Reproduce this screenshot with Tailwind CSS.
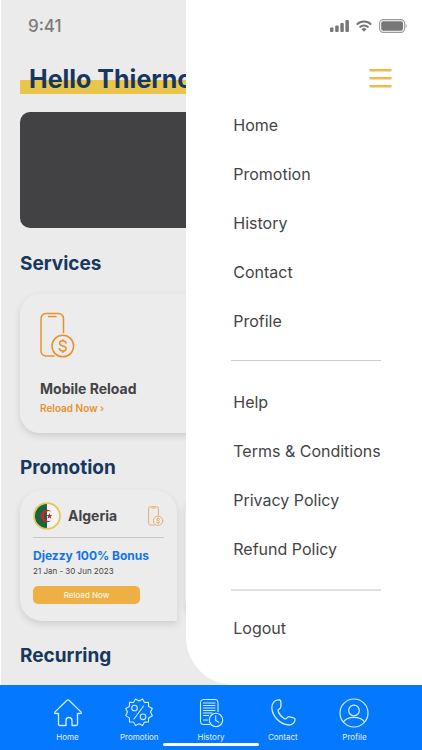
<!DOCTYPE html>
<html lang="en">
<head>
<meta charset="utf-8">
<meta name="viewport" content="width=device-width, initial-scale=1">
<title>Mobile Reload</title>
<script src="https://cdn.jsdelivr.net/npm/@tailwindcss/browser@4"></script>
</head>
<body class="bg-white font-['Inter','Liberation_Sans',sans-serif] text-[#444446]">
<svg class="hidden" aria-hidden="true">
  <symbol id="phone-coin" viewBox="0 0 36 46">
    <g fill="none" stroke="currentColor" stroke-linecap="round" stroke-linejoin="round">
      <path d="M23.500 20.500V6.500a5 5 0 0 0-5-5H6a5 5 0 0 0-5 5V39a5 5 0 0 0 5 5h8M8.500 4.500h7.500"/>
      <circle cx="22.800" cy="34" r="10.800"/>
      <path d="M26 31c-.4-1.500-1.600-2.200-3.200-2.200-1.900 0-3.200 1-3.200 2.500 0 3.600 6.600 1.600 6.600 5.200 0 1.600-1.500 2.600-3.400 2.600s-3.200-.9-3.500-2.400M22.800 27.800v1M22.800 39.200v1.400"/>
    </g>
  </symbol>
</svg>
<div class="flex min-h-screen flex-col">
  <div class="relative flex-1 overflow-hidden border-l border-white bg-[#ebebeb]">
    <main class="pl-[19px]">
      <p class="pl-2 pt-4 text-[17px] leading-5 font-medium text-[#7b7b7b]">9:41</p>
      <h1 class="mt-7 bg-linear-to-b from-transparent from-53% to-[#e9c54b] to-53% bg-no-repeat pl-[9px] text-[25px] leading-[30px] font-bold whitespace-nowrap text-[#17375e]">Hello Thierno</h1>
      <div class="mt-[18px] h-[116px] rounded-[10px] bg-[#424244]"></div>
      <h2 class="mt-[22px] text-[19px] leading-7 font-bold text-[#17375e]">Services</h2>
      <section class="mt-4 h-[139px] rounded-[20px] bg-[#ececec] pt-[18px] pl-5 shadow-[0_3px_6px_rgba(60,60,90,0.16)]">
        <svg class="h-[46px] w-9 text-[#e8912c] [stroke-width:1.5]"><use href="#phone-coin"/></svg>
        <h3 class="mt-5 text-sm leading-[22px] font-bold">Mobile Reload</h3>
        <a href="#" class="block text-[10px] leading-4 font-semibold text-[#e8912c]">Reload Now&nbsp;›</a>
      </section>
      <h2 class="mt-[21px] text-[19px] leading-7 font-bold text-[#17375e]">Promotion</h2>
      <div class="mt-2 flex gap-2">
        <article class="h-[131px] w-[157px] shrink-0 rounded-[22px] rounded-br-none bg-[#ececec] px-[13px] pt-[13px] shadow-[0_3px_6px_rgba(60,60,90,0.16)]">
          <div class="flex h-[35px] items-center border-b border-[#cbc7c4] pb-2">
            <svg class="size-7 shrink-0" viewBox="0 0 27 27">
              <circle cx="13.500" cy="13.500" r="12.500" fill="#f4f4f2"/>
              <path d="M13.500 1.500a12 12 0 0 0 0 24z" fill="#11683a"/>
              <path d="M17.800 9.500a6 6 0 1 0 0 8 4.700 4.700 0 1 1 0-8z" fill="#d01f3c"/>
              <path d="m15.800 10.600.7 2 2.200.1-1.700 1.300.6 2.100-1.800-1.200-1.800 1.200.6-2.100-1.700-1.300 2.200-.1z" fill="#d01f3c"/>
              <circle cx="13.500" cy="13.500" r="12.500" fill="none" stroke="#e7c359" stroke-width="1.700"/>
            </svg>
            <h3 class="ml-[7px] flex-1 text-sm font-bold">Algeria</h3>
            <svg class="h-5 w-4 text-[#eba55a] [stroke-width:2]"><use href="#phone-coin"/></svg>
          </div>
          <h4 class="mt-2.5 text-xs leading-4 font-bold whitespace-nowrap text-[#1374e9]">Djezzy 100% Bonus</h4>
          <p class="text-[8px] leading-[14px]">21 Jan - 30 Jun 2023</p>
          <button class="mt-2 block h-[18px] w-[107px] rounded-[5px] bg-[#eeb044] text-[8px] font-medium text-[#fbf3e2]">Reload Now</button>
        </article>
        <article class="h-[131px] flex-1 rounded-[22px] bg-[#ececec] shadow-[0_3px_6px_rgba(60,60,90,0.16)]"></article>
      </div>
      <h2 class="mt-[21px] pb-3 text-[19px] leading-7 font-bold text-[#17375e]">Recurring</h2>
    </main>

    <aside class="absolute inset-y-0 right-0 w-[56%] rounded-bl-[48px] bg-white pl-[47px]">
      <div class="flex h-[52px] items-center justify-end gap-[7px] pr-[15px]">
        <svg class="h-3 w-[19px]" viewBox="0 0 19 12" fill="#777"><rect y="7.500" width="3.500" height="4.500" rx="1"/><rect x="5.200" y="5.500" width="3.500" height="6.500" rx="1"/><rect x="10.300" y="3" width="3.500" height="9" rx="1"/><rect x="15.400" width="3.500" height="12" rx="1"/></svg>
        <svg class="h-3 w-4" viewBox="0 0 16 12" fill="none" stroke="#777" stroke-width="2"><path d="M.8 4.600a10.200 10.200 0 0 1 14.400 0M3.500 7.400a6.400 6.400 0 0 1 9 0"/><path d="M5.500 9.300a3.500 3.500 0 0 1 5 0L8 11.800z" fill="#777" stroke="none"/></svg>
        <svg class="h-[14px] w-7" viewBox="0 0 28 14"><rect x=".6" y=".6" width="25" height="12.800" rx="3.800" fill="none" stroke="#999" stroke-width="1.100"/><rect x="2.200" y="2.200" width="21.800" height="9.600" rx="2" fill="#777"/><path d="M26.700 4.800v4.400c1.200-.5 1.200-3.900 0-4.400z" fill="#999"/></svg>
      </div>
      <div class="flex h-12 items-start justify-end pt-4 pr-[30px]">
        <button aria-label="Close menu" class="block"><svg class="h-5 w-[23px]" viewBox="0 0 23 20" stroke="#f3b74c" stroke-width="2.600" stroke-linecap="round"><path d="M1.500 2.300h20M1.500 10.300h20M1.500 18.300h20"/></svg></button>
      </div>
      <nav aria-label="Menu" class="pr-[41px] text-base whitespace-nowrap">
        <a href="#" class="flex h-[49px] items-center">Home</a>
        <a href="#" class="flex h-[49px] items-center">Promotion</a>
        <a href="#" class="flex h-[49px] items-center">History</a>
        <a href="#" class="flex h-[49px] items-center">Contact</a>
        <a href="#" class="flex h-[49px] items-center">Profile</a>
        <hr class="-ml-0.5 mt-[15px] mb-4 border-[#cfcdca]">
        <a href="#" class="flex h-[49px] items-center">Help</a>
        <a href="#" class="flex h-[49px] items-center">Terms &amp; Conditions</a>
        <a href="#" class="flex h-[49px] items-center">Privacy Policy</a>
        <a href="#" class="flex h-[49px] items-center">Refund Policy</a>
        <hr class="-ml-0.5 mt-4 mb-3 border-t-2 border-[#e2e1df]">
        <a href="#" class="flex h-[49px] items-center">Logout</a>
      </nav>
    </aside>
  </div>

  <nav aria-label="Tabs" class="relative flex h-[65px] shrink-0 justify-center bg-[#0478fe] pt-[13px] text-[8px] leading-3 text-[#e4f3ff]">
    <a href="#" class="flex w-[17%] flex-col items-center gap-[3px]">
      <svg class="size-[30px]" viewBox="0 0 30 30" fill="none" stroke="#d2f0ff" stroke-width="1.300" stroke-linejoin="round" stroke-linecap="round"><path d="M5.500 15.500H2.600c-1 0-1.200-.9-.5-1.600L14 2.300c.7-.6 1.300-.6 2 0l11.900 11.600c.7.700.5 1.600-.5 1.600h-2.900V26c0 1-.5 1.500-1.500 1.500h-4v-5a3 3 0 0 0-6 0v5H7c-1 0-1.500-.5-1.500-1.500z"/></svg>
      Home</a>
    <a href="#" class="flex w-[17%] flex-col items-center gap-[3px]">
      <svg class="size-[30px]" viewBox="0 0 30 30" fill="none" stroke="#d2f0ff" stroke-width="1.100" stroke-linejoin="round" stroke-linecap="round"><path d="m15 3 3.500-2 2 3.500 4-.1.100 4 3.700 2.100-1.800 3.600 1.800 3.600-3.700 2.300-.1 4-4 .1-2 3.500L15 25.800l-3.500 1.700-2-3.500-4-.1-.1-4-3.700-2.300 1.800-3.600-1.800-3.500 3.700-2.100.1-4 4 .1 2-3.500z"/><circle cx="10.500" cy="10" r="2.800"/><circle cx="19" cy="18.800" r="2.800"/><path d="m19.500 8-9.500 13"/></svg>
      Promotion</a>
    <a href="#" class="flex w-[17%] flex-col items-center gap-[3px]">
      <svg class="size-[30px]" viewBox="0 0 30 30" fill="none" stroke="#d2f0ff" stroke-width="1.100" stroke-linecap="round"><path d="M13.500 26.500H7.500a3 3 0 0 1-3-3V4.500a3 3 0 0 1 3-3H19a3 3 0 0 1 3 3v9"/><path d="M7.500 5h11.500M7.500 7.500h11.500M7.500 10h11.500M7.500 12.500h11.500M7.500 15h8.500M7.500 17.500h5M7.500 22h4"/><circle cx="20" cy="22" r="6.700"/><path d="M19.700 17.800v4.700l3 1.800"/></svg>
      History</a>
    <a href="#" class="flex w-[17%] flex-col items-center gap-[3px]">
      <svg class="size-[30px]" viewBox="0 0 30 30" fill="none" stroke="#d2f0ff" stroke-width="1.300" stroke-linejoin="round"><path d="M5.700 4.200C7.300 2 9 1.500 11.500 2c1 .2 1.400 1 1.400 2v4.500c0 1.300-.6 1.900-1.700 2.500-1.300.7-1.400 1.300-1 2.500 1 2.700 3.300 5.400 6 7 1.200.7 2 .5 2.700-.5.800-1.300 1.500-1.500 2.700-1.200l4 1c1.300.3 1.600 1 1.500 2-.3 3-3 5.400-6.500 5.200C11.500 26.500 4 17.500 3.800 9.500c0-2 .7-3.800 1.900-5.300z"/></svg>
      Contact</a>
    <a href="#" class="flex w-[17%] flex-col items-center gap-[3px]">
      <svg class="size-[30px]" viewBox="0 0 30 30" fill="none" stroke="#d2f0ff" stroke-width="1.200"><circle cx="15" cy="15" r="14"/><circle cx="15" cy="12.500" r="5.300"/><path d="M4.300 24c2.400-3.300 6.200-4.700 10.700-4.700s8.300 1.400 10.700 4.700"/></svg>
      Profile</a>
    <div class="absolute bottom-1 left-1/2 h-[3px] w-24 -translate-x-1/2 rounded-full bg-white"></div>
  </nav>
</div>
</body>
</html>
